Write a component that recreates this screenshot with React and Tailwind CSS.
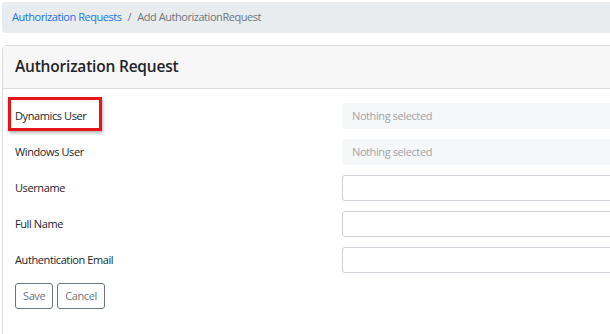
import React from 'react';

const rows = [
    { label: 'Dynamics User', kind: 'select', marked: true },
    { label: 'Windows User', kind: 'select' },
    { label: 'Username', kind: 'input' },
    { label: 'Full Name', kind: 'input' },
    { label: 'Authentication Email', kind: 'input' },
];

const App = () => {
    return (
        <div
            className="w-[610px] h-[334px] overflow-hidden bg-white text-[#212529]"
            style={{ fontFamily: '"Open Sans", "Noto Sans", sans-serif' }}
        >
            <div className="w-[660px] pl-[2px] pt-[2px]">
                {/* Breadcrumb */}
                <nav className="h-[31px] rounded-[4px] bg-[#e9ecef] px-[10px] flex items-center text-[11px] tracking-[-0.45px]">
                    <span className="text-[#1a73e8]">Authorization Requests</span>
                    <span className="px-[6px] text-[#6c757d]">/</span>
                    <span className="text-[#6c757d]">Add AuthorizationRequest</span>
                </nav>

                {/* Card */}
                <div className="mt-[12px] border border-[#dcdcdc] rounded-t-[4px] h-[300px]">
                    <div className="h-[43px] bg-[#f7f7f7] border-b border-[#dcdcdc] px-[12px] flex items-center">
                        <h1 className="text-[15.5px] font-semibold tracking-[-0.2px]">Authorization Request</h1>
                    </div>

                    <form className="px-[12px] pt-[14px]">
                        {rows.map((row) => (
                            <div key={row.label} className="flex items-center h-[26px] mb-[10px]">
                                <div className="w-[327px] shrink-0 relative text-[11px] tracking-[-0.4px]">
                                    {row.label}
                                    {row.marked && (
                                        <div className="absolute left-[-7px] top-[-11px] w-[94px] h-[34px] border-[3px] border-[#e8141c] shadow-[1px_2px_3px_rgba(0,0,0,0.3)]"></div>
                                    )}
                                </div>
                                {row.kind === 'select' ? (
                                    <div className="flex-1 h-[26px] rounded-[3px] bg-[#f6f7f9] pl-[10px] flex items-center text-[11px] tracking-[-0.4px] text-[#9ea3a8]">
                                        Nothing selected
                                    </div>
                                ) : (
                                    <input
                                        type="text"
                                        className="flex-1 h-[26px] rounded-[3px] border border-[#ced4da] bg-white"
                                    />
                                )}
                            </div>
                        ))}

                        <div className="flex gap-[4px]">
                            <button
                                type="button"
                                className="h-[26px] px-[7px] rounded-[3px] border border-[#6c757d] text-[#6c757d] text-[11px] tracking-[-0.4px]"
                            >
                                Save
                            </button>
                            <button
                                type="button"
                                className="h-[26px] px-[7px] rounded-[3px] border border-[#6c757d] text-[#6c757d] text-[11px] tracking-[-0.4px]"
                            >
                                Cancel
                            </button>
                        </div>
                    </form>
                </div>
            </div>
        </div>
    );
};

export default App;
